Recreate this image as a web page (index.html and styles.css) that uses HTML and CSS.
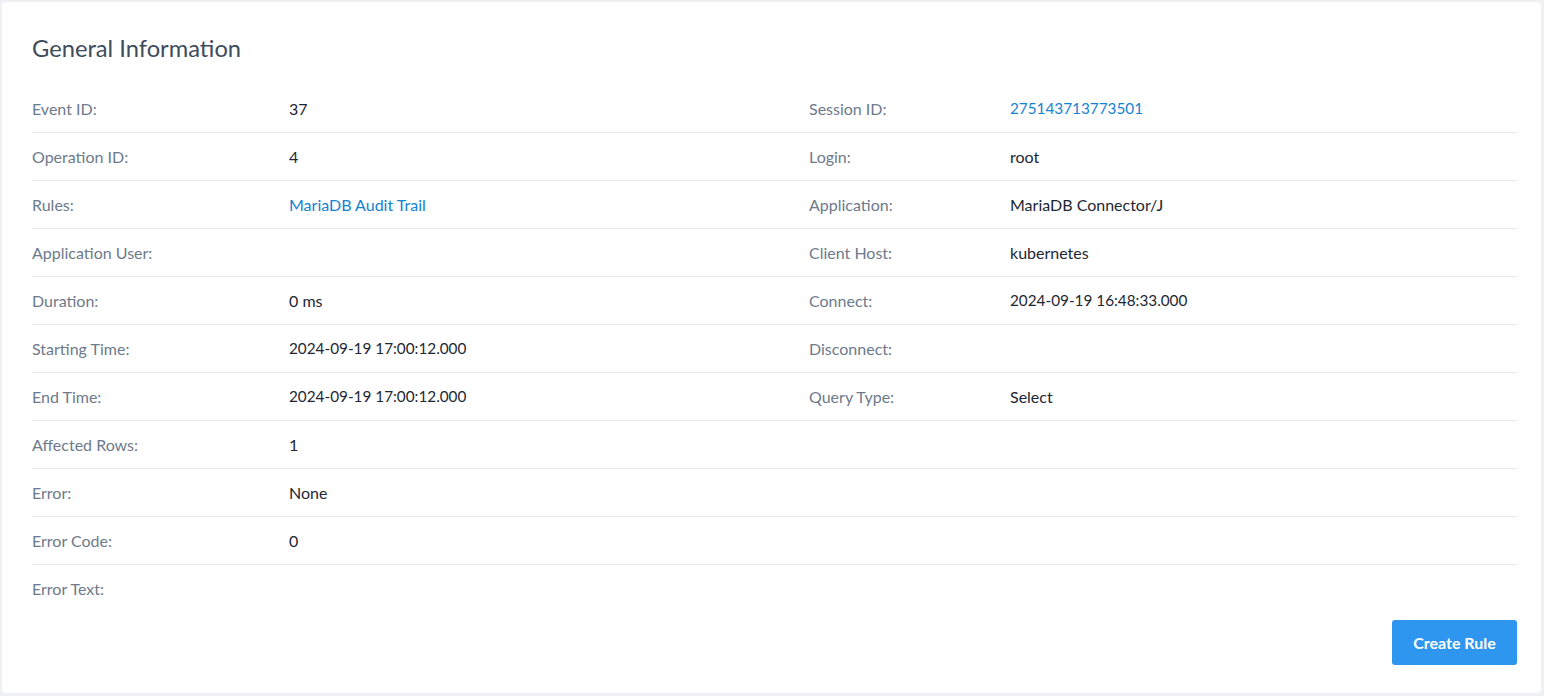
FILE: index.html
```html
<!DOCTYPE html>
<html lang="en">
<head>
    <meta charset="UTF-8">
    <title>General Information</title>
    <link rel="stylesheet" href="styles.css">
</head>
<body>
<div class="card">
    <h2 class="card-title">General Information</h2>

    <!-- each row: label, value, label, value -->
    <div class="info">
        <div class="row">
            <span class="label">Event ID:</span><span class="value">37</span>
            <span class="label">Session ID:</span><a class="value link num" href="#">275143713773501</a>
        </div>
        <div class="row">
            <span class="label">Operation ID:</span><span class="value">4</span>
            <span class="label">Login:</span><span class="value">root</span>
        </div>
        <div class="row">
            <span class="label">Rules:</span><a class="value link" href="#">MariaDB Audit Trail</a>
            <span class="label">Application:</span><span class="value">MariaDB Connector/J</span>
        </div>
        <div class="row">
            <span class="label">Application User:</span><span class="value"></span>
            <span class="label">Client Host:</span><span class="value">kubernetes</span>
        </div>
        <div class="row">
            <span class="label">Duration:</span><span class="value">0 ms</span>
            <span class="label">Connect:</span><span class="value num">2024-09-19 16:48:33.000</span>
        </div>
        <div class="row">
            <span class="label">Starting Time:</span><span class="value num">2024-09-19 17:00:12.000</span>
            <span class="label">Disconnect:</span><span class="value"></span>
        </div>
        <div class="row">
            <span class="label">End Time:</span><span class="value num">2024-09-19 17:00:12.000</span>
            <span class="label">Query Type:</span><span class="value">Select</span>
        </div>
        <div class="row">
            <span class="label">Affected Rows:</span><span class="value">1</span>
            <span class="label"></span><span class="value"></span>
        </div>
        <div class="row">
            <span class="label">Error:</span><span class="value">None</span>
            <span class="label"></span><span class="value"></span>
        </div>
        <div class="row">
            <span class="label">Error Code:</span><span class="value">0</span>
            <span class="label"></span><span class="value"></span>
        </div>
        <div class="row">
            <span class="label">Error Text:</span><span class="value"></span>
            <span class="label"></span><span class="value"></span>
        </div>
    </div>

    <div class="actions">
        <button class="btn-primary" type="button">Create Rule</button>
    </div>
</div>
</body>
</html>
```

FILE: styles.css
```css
body {
    margin: 0;
    padding: 2px 3px 3px 2px;
    background-color: #eef1f4;
    font-family: Lato, "Open Sans", sans-serif;
}

.card {
    background-color: #fff;
    border-radius: 4px;
    padding: 30px 24px 28px 30px;
}

.card-title {
    margin: 0 0 21px;
    font-size: 23.7px;
    line-height: 32px;
    font-weight: 400;
    color: #3e4c5c;
}

.row {
    display: grid;
    grid-template-columns: 257px 520px 201px 1fr;
    align-items: center;
    height: 48px;
    box-sizing: border-box;
    padding-bottom: 1px;
    border-bottom: 1px solid #e6e8eb;
    font-size: 16px;
}

.row:last-child {
    border-bottom: none;
}

.label {
    color: #6d7a8b;
}

.value {
    color: #1d2733;
}

.value.num {
    font-size: 15.3px;
}

.value.link {
    color: #1582d4;
    text-decoration: none;
}

.actions {
    display: flex;
    justify-content: flex-end;
    margin-top: 7px;
}

.btn-primary {
    height: 45px;
    width: 125px;
    border: none;
    border-radius: 3px;
    background-color: #2e96ee;
    color: #fff;
    font-family: inherit;
    font-size: 16px;
    font-weight: 700;
}
```
